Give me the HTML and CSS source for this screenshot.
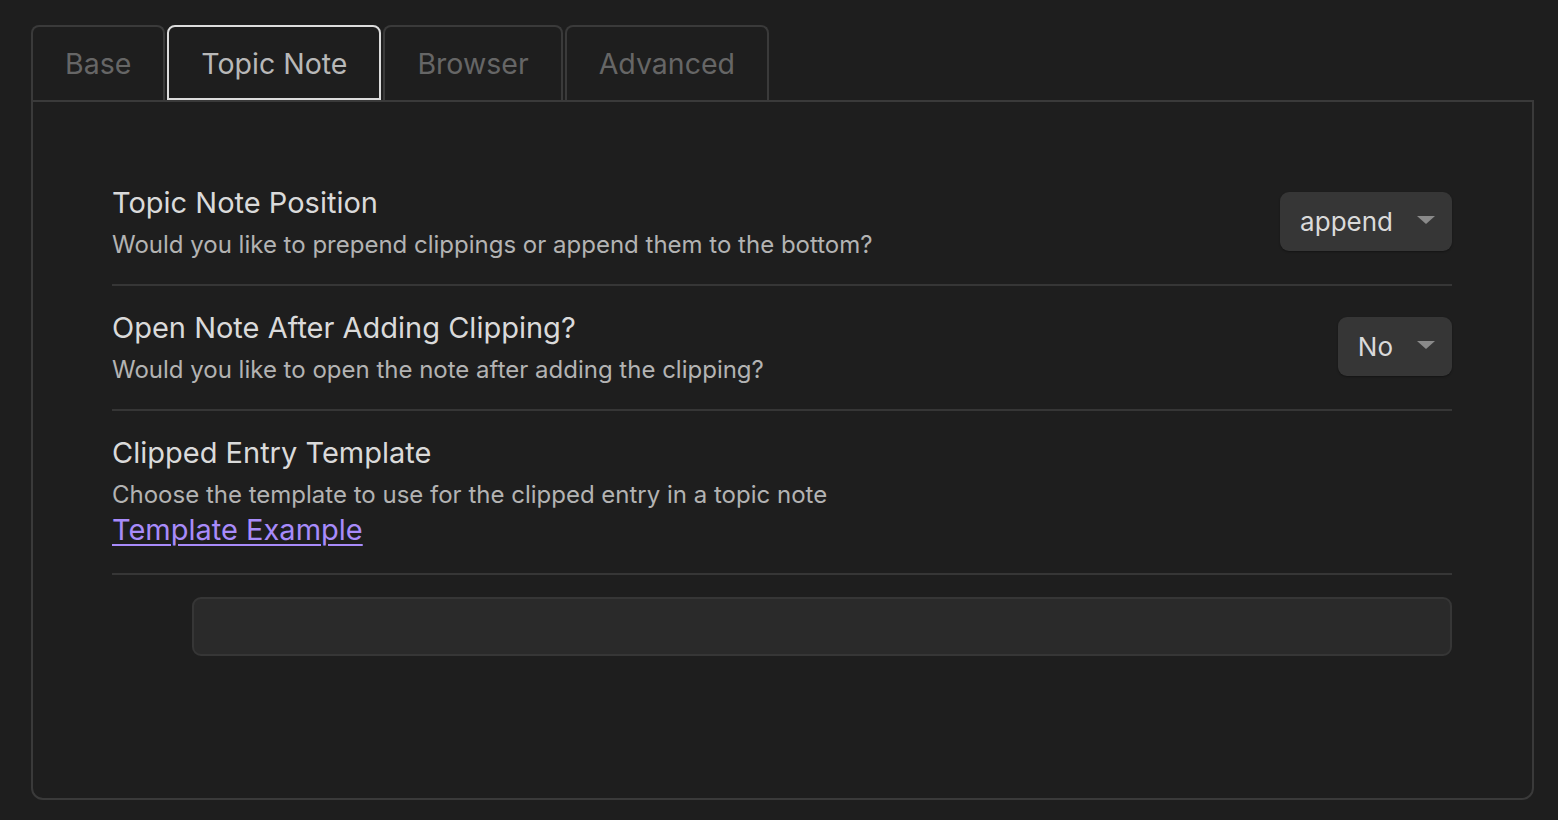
FILE: index.html
```html
<!DOCTYPE html>
<html>
<head>
<meta charset="utf-8">
<link rel="stylesheet" href="styles.css">
</head>
<body>
<div class="tabs">
  <div class="tab">Base</div>
  <div class="tab active">Topic Note</div>
  <div class="tab">Browser</div>
  <div class="tab">Advanced</div>
</div>
<div class="panel">
  <div class="setting">
    <div class="info">
      <div class="name">Topic Note Position</div>
      <div class="desc">Would you like to prepend clippings or append them to the bottom?</div>
    </div>
    <div class="dropdown"><span>append</span><span class="arrow"></span></div>
  </div>
  <div class="setting">
    <div class="info">
      <div class="name">Open Note After Adding Clipping?</div>
      <div class="desc">Would you like to open the note after adding the clipping?</div>
    </div>
    <div class="dropdown"><span>No</span><span class="arrow"></span></div>
  </div>
  <div class="setting last">
    <div class="info">
      <div class="name">Clipped Entry Template</div>
      <div class="desc">Choose the template to use for the clipped entry in a topic note</div>
      <div class="linkline"><a href="#" class="link">Template Example</a></div>
    </div>
  </div>
  <div class="textarea-wrap">
    <div class="textarea"></div>
  </div>
</div>
</body>
</html>
```
FILE: styles.css
```css
html, body {
  margin: 0;
  background: #1e1e1e;
}
body {
  padding: 25px 0 0 31px;
  font-family: Inter, "Noto Sans", sans-serif;
  color: #dadada;
}
.tabs {
  display: flex;
  gap: 2px;
  height: 75px;
}
.tab {
  box-sizing: border-box;
  height: 75px;
  padding: 0 32px;
  border: 2px solid #3a3a3a;
  border-bottom: none;
  border-radius: 8px 8px 0 0;
  font-size: 28.5px;
  color: #666666;
  display: flex;
  align-items: center;
  justify-content: center;
}
.tab.active {
  border: 2px solid #dcdcdc;
  border-radius: 8px 8px 0 0;
  padding-top: 1px;
  color: #b8b8b8;
}
.panel {
  box-sizing: border-box;
  width: 1503px;
  height: 700px;
  border: 2px solid #3a3a3a;
  border-radius: 0 0 12px 12px;
  padding: 59px 80px 0 79px;
}
.setting {
  display: flex;
  align-items: center;
  justify-content: space-between;
  padding: 22px 0 17px;
  border-bottom: 2px solid #363636;
}
.setting.last {
  padding-bottom: 30px;
}
.name {
  font-size: 29px;
  line-height: 40px;
  color: #dadada;
}
.desc {
  font-size: 24px;
  line-height: 44px;
  color: #b3b3b3;
}
.linkline {
  line-height: 26px;
  height: 26px;
}
.link {
  font-size: 29px;
  color: #a88bfa;
  text-decoration: underline;
  text-underline-offset: 4px;
  text-decoration-thickness: 2px;
}
.dropdown {
  box-sizing: border-box;
  height: 59px;
  padding: 0 17px 0 20px;
  background: #363636;
  border-radius: 9px;
  box-shadow: 0 1px 2px rgba(0,0,0,0.35);
  display: flex;
  align-items: center;
  gap: 24px;
  font-size: 26px;
  color: #dadada;
  margin-top: -8px;
}
.arrow {
  width: 0;
  height: 0;
  border-left: 9px solid transparent;
  border-right: 9px solid transparent;
  border-top: 8px solid #8a8a8a;
  margin-top: -2px;
}
.textarea-wrap {
  padding: 22px 0 0 80px;
}
.textarea {
  box-sizing: border-box;
  height: 59px;
  background: #2a2a2a;
  border: 2px solid #363636;
  border-radius: 9px;
}
```
